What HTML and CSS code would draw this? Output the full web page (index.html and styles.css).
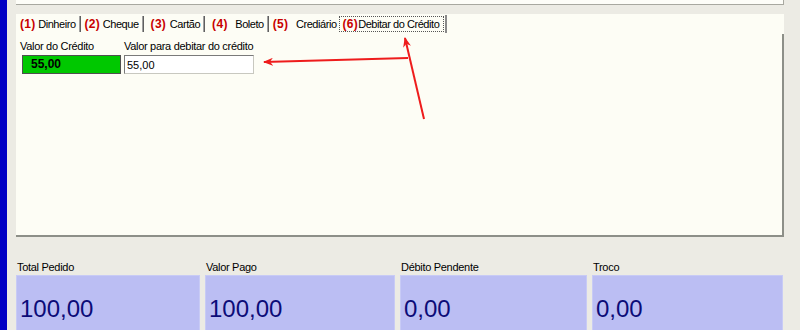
FILE: index.html
```html
<!DOCTYPE html>
<html lang="pt-BR">
<head>
  <meta charset="UTF-8">
  <title>Pagamento</title>
  <link rel="stylesheet" href="styles.css">
</head>
<body>
  <div class="window">
    <div class="side-bar"></div>
    <div class="main">
      <div class="top-box"></div>

      <div class="panel">
        <div class="tabs">
          <span class="tab"><b>(1)</b> Dinheiro</span><span class="sep"></span>
          <span class="tab"><b>(2)</b> Cheque</span><span class="sep"></span>
          <span class="tab wide"><b class="gap">(3)</b> Cartão</span><span class="sep"></span>
          <span class="tab wide"><b class="gap2">(4)</b> Boleto</span><span class="sep"></span>
          <span class="tab"><b class="gap2">(5)</b> Crediário</span>
          <span class="tab active"><span class="focus"><b>(6)</b>Debitar do Crédito</span></span>
        </div>
        <div class="page">
          <div class="fields">
            <div class="field">
              <label>Valor do Crédito</label>
              <div class="credit">55,00</div>
            </div>
            <div class="field">
              <label>Valor para debitar do crédito</label>
              <input type="text" class="debit" value="55,00">
            </div>
          </div>
        </div>
      </div>

      <div class="totals">
        <div class="total t1">
          <label>Total Pedido</label>
          <div class="amount">100,00</div>
        </div>
        <div class="total t2">
          <label>Valor Pago</label>
          <div class="amount">100,00</div>
        </div>
        <div class="total t3">
          <label>Débito Pendente</label>
          <div class="amount">0,00</div>
        </div>
        <div class="total t4">
          <label>Troco</label>
          <div class="amount">0,00</div>
        </div>
      </div>
    </div>
  </div>

  <!-- annotation arrows drawn over the screenshot -->
  <svg class="arrows" width="800" height="330" viewBox="0 0 800 330">
    <defs>
      <marker id="head" markerWidth="10" markerHeight="8" refX="9" refY="4" orient="auto" markerUnits="userSpaceOnUse">
        <path d="M0,0 L10,4 L0,8 L3,4 Z" fill="#ee1c1c"/>
      </marker>
    </defs>
    <line x1="408" y1="58" x2="264" y2="62" stroke="#ee1c1c" stroke-width="2" marker-end="url(#head)"/>
    <line x1="424" y1="119" x2="405" y2="38" stroke="#ee1c1c" stroke-width="2" marker-end="url(#head)"/>
  </svg>
</body>
</html>
```

FILE: styles.css
```css
body {
  margin: 0;
  background: #ecebe4;
  font-family: "Liberation Sans", Arial, sans-serif;
  font-size: 11px;
  letter-spacing: -0.3px;
  color: #000;
  width: 800px;
  height: 330px;
  overflow: hidden;
  position: relative;
}
.window {
  display: flex;
  height: 330px;
}
.side-bar {
  width: 7px;
  background: #0000c4;
}
.main {
  flex: 1;
  padding: 0 16px 0 9px;
}
.top-box {
  height: 4px;
  background: #fdfdf8;
  border-bottom: 1px solid #a8a8a0;
  border-right: 1px solid #a8a8a0;
}
.panel {
  margin-top: 9px;
  background: #fdfdf5;
}
.tabs {
  height: 20px;
  display: flex;
  align-items: center;
  padding-left: 2px;
  letter-spacing: -0.45px;
}
.tab {
  white-space: nowrap;
  padding: 0 2px;
}
.tab.wide {
  padding-left: 5px;
}
.tab b {
  color: #c80000;
  font-size: 12px;
  letter-spacing: 0.3px;
}
.tab b.gap {
  margin-right: 1px;
}
.tab b.gap2 {
  margin-right: 5px;
}
.sep {
  width: 1px;
  height: 16px;
  background: #a0a0a0;
  border-right: 1px solid #606060;
  margin: 0 2px 0 1px;
}
.tab.active {
  margin-left: 0;
  height: 18px;
  display: flex;
  align-items: center;
  border-right: 2px solid #8a8a8a;
  padding: 0 1px 0 0;
}
.focus {
  border: 1px dotted #555;
  padding: 0 4px 0 3px;
}
.page {
  height: 201px;
  border-right: 2px solid #8d8f88;
  border-bottom: 2px solid #8d8f88;
}
.fields {
  display: flex;
  padding: 6px 0 0 4px;
  gap: 3px;
}
.field label {
  display: block;
  height: 15px;
}
.credit {
  width: 89px;
  height: 17px;
  line-height: 17px;
  margin-left: 2px;
  padding-left: 8px;
  background: #00c800;
  border: 1px solid #505050;
  font-weight: bold;
  font-size: 12px;
  letter-spacing: 0;
}
.debit {
  width: 124px;
  height: 15px;
  padding: 1px 2px;
  margin: 0;
  font-family: inherit;
  font-size: 11px;
  border: 1px solid #7a7a7a;
  border-right-color: #c8c8c0;
  border-bottom-color: #c8c8c0;
  background: #fff;
}
.totals {
  display: flex;
  margin-top: 24px;
  gap: 5px;
}
.total label {
  display: block;
  height: 14px;
  padding-left: 1px;
}
.total .amount {
  height: 60px;
  background: #bbbef3;
  border: 1px solid #c8cbf5;
  color: #0c0c78;
  font-size: 24px;
  letter-spacing: 0;
  padding: 19px 0 0 3px;
  box-sizing: border-box;
}
.t1 { width: 184px; }
.t2 { width: 190px; }
.t3 { width: 187px; }
.t4 { width: 191px; }
.arrows {
  position: absolute;
  left: 0;
  top: 0;
  pointer-events: none;
}
```
